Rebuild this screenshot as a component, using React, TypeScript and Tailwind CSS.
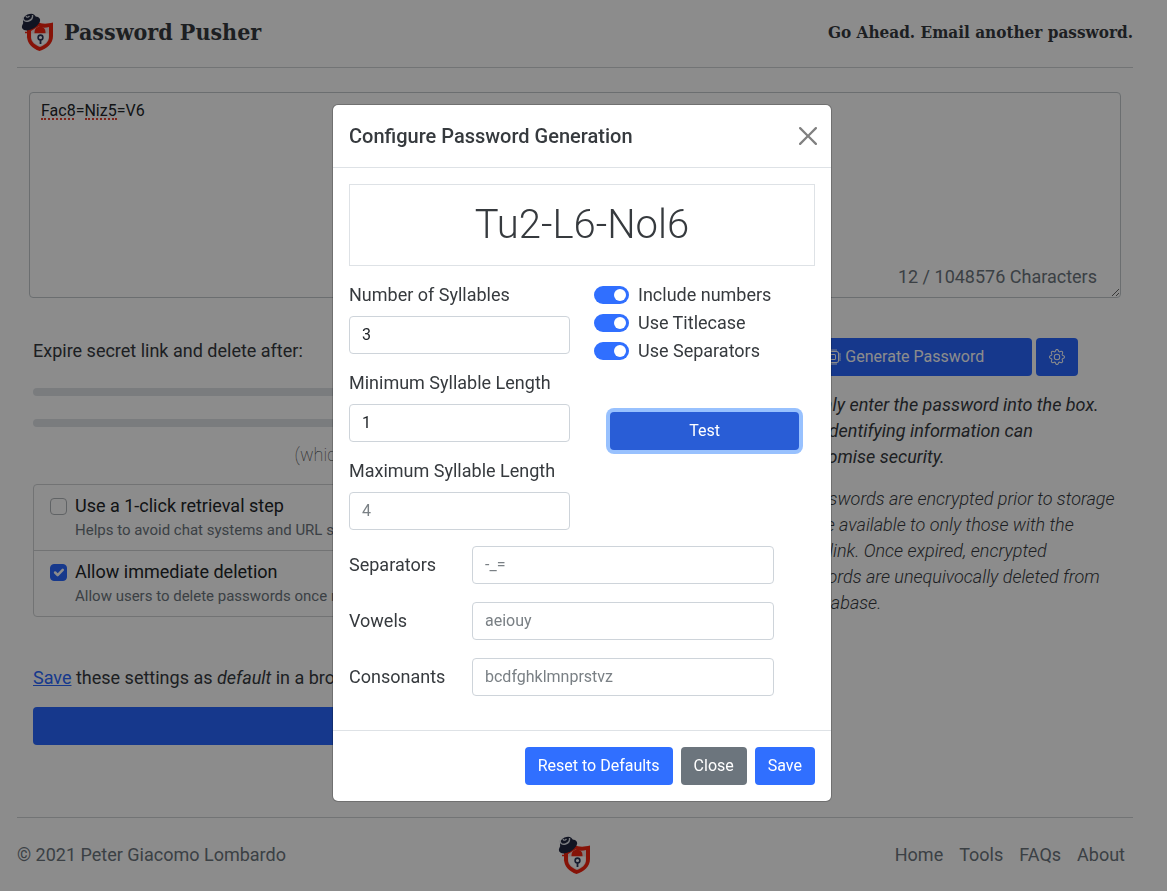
import { useState } from "react";
import { BsCpu, BsGear } from "react-icons/bs";

const Logo = () => {
    return (
        <svg className="w-9 h-10" viewBox="0 0 36 40" aria-hidden="true">
            <path d="M17 9.500c5 3 10 2.500 16 1V24c0 7.500-6 12.500-13.500 15C12 36.500 7 31 7 24v-6z" fill="#f5230f" />
            <path d="M18.500 14.500c3.500 1.500 7 1.500 10.500.5V25c0 5-4 8-9 10-5-2-9-5-9-10v-6z" fill="#f2dede" />
            <path d="M14.500 21.500v-1.500a5.500 5.500 0 0 1 11 0v1.500z" fill="#f5230f" />
            <path d="M11.500 21.500h17v4c-.6 4.500-4.500 7-8.500 8.500-4-1.500-7.900-4-8.500-8.500z" fill="#fff" />
            <circle cx="20.500" cy="25.500" r="2.400" fill="#fff" stroke="#2c3356" strokeWidth="1.600" />
            <path d="M20.500 28v4" stroke="#2c3356" strokeWidth="1.800" />
            <ellipse cx="11" cy="11.500" rx="10" ry="5.500" transform="rotate(-30 11 11.500)" fill="#20263f" />
            <path d="M3.500 12C2 8 4 4 7.500 2.500S15 1 16 6c-2 4-8 7-12.500 6z" fill="#20263f" />
            <path d="M3 5.500c0 3 2.500 4.500 5.500 3.500s4.500-3 4-6" fill="none" stroke="#dfe2ea" strokeWidth="1.400" />
            <path d="M6 4c.5 1.500 2 1.800 3.500 0" fill="none" stroke="#dfe2ea" strokeWidth="1.200" />
            <path d="M5 20.500h4l-1.500 5" fill="none" stroke="#f5230f" strokeWidth="1.500" />
        </svg>
    );
};

const Header = () => {
    return (
        <header className="flex items-center justify-between h-[68px] pb-1 border-b border-[#cfd4d6] font-['Roboto_Slab','DejaVu_Serif_Condensed','DejaVu_Serif',serif] font-bold">
            <a href="#" className="flex items-center gap-2 pl-[3px] text-[23px]">
                <Logo />
                <h1>Password Pusher</h1>
            </a>
            <p className="text-[17px]">Go Ahead. Email another password.</p>
        </header>
    );
};

const options = [
    { id: "retrieval", title: "Use a 1-click retrieval step", help: "Helps to avoid chat systems and URL scanners from eating up views.", checked: false },
    { id: "deletion", title: "Allow immediate deletion", help: "Allow users to delete passwords once retrieved.", checked: true },
];

const PushForm = () => {
    return (
        <main className="px-3 pt-6">
            <div className="relative">
                <textarea
                    aria-label="Password"
                    spellCheck={false}
                    defaultValue="Fac8=Niz5=V6"
                    className="block w-full h-[206px] px-[11px] py-1.5 border border-[#c3c9cd] rounded text-base leading-6 text-[#212529] resize"
                />
                <div className="absolute left-3 top-6 flex gap-[11px]">
                    <span className="w-[33px] border-b-2 border-dotted border-[#e8432f]"></span>
                    <span className="w-8 h-1 border-b-2 border-dotted border-[#e8432f]"></span>
                </div>
                <p className="absolute right-6 bottom-2 text-[#6c757d]">12 / 1048576 Characters</p>
            </div>

            <div className="grid grid-cols-[65%_1fr] gap-x-10 px-1 pt-10">
                <section>
                    <p>Expire secret link and delete after:</p>
                    <input type="range" aria-label="Days" className="mt-6 block w-full h-2 appearance-none rounded-full bg-[#dee2e6]" />
                    <input type="range" aria-label="Views" className="mt-[23px] block w-full h-2 appearance-none rounded-full bg-[#dee2e6]" />
                    <p className="mt-[15px] text-center font-thin">(whichever comes first)</p>
                    <ul className="mt-4 border border-[#cfd2d4] rounded divide-y divide-[#cfd2d4]">
                        {options.map((option) => (
                            <li key={option.id} className="flex gap-2 px-4 pt-2 pb-[9px]">
                                <div className="grid w-[17px] h-[17px] mt-[5px] shrink-0">
                                    <input
                                        id={option.id}
                                        type="checkbox"
                                        defaultChecked={option.checked}
                                        className="peer col-start-1 row-start-1 w-[17px] h-[17px] appearance-none rounded border border-[#b0b4b8] checked:bg-[#2a69ff] checked:border-[#2a69ff]"
                                    />
                                    <svg viewBox="0 0 20 20" className="col-start-1 row-start-1 w-[17px] h-[17px] hidden peer-checked:block pointer-events-none" fill="none" stroke="white" strokeWidth="3" strokeLinecap="round" strokeLinejoin="round">
                                        <path d="M6 10l3 3 6-6" />
                                    </svg>
                                </div>
                                <div>
                                    <label htmlFor={option.id} className="block text-[#212529]">{option.title}</label>
                                    <p className="text-[15px] leading-[22px] text-[#6c757d]">{option.help}</p>
                                </div>
                            </li>
                        ))}
                    </ul>
                    <p className="mt-12"><a href="#" className="text-[#2a69ff] underline">Save</a> these settings as <em>default</em> in a browser cookie.</p>
                    <button className="mt-4 w-full h-[38px] rounded bg-[#2866ff] text-base text-white">Push It!</button>
                </section>

                <section>
                    <div className="flex gap-1 pr-[39px]">
                        <button className="flex-1 h-[38px] rounded bg-[#2866ff] text-base text-white flex items-center justify-center gap-1">
                            <BsCpu className="w-4 h-4" />Generate Password
                        </button>
                        <button aria-label="Configure" className="w-[42px] h-[38px] rounded bg-[#2866ff] text-white flex items-center justify-center">
                            <BsGear className="w-4 h-4" />
                        </button>
                    </div>
                    <div className="pt-4 italic whitespace-nowrap">
                        <p>Tip: Only enter the password into the box.<br />Other identifying information can<br />compromise security.</p>
                        <p className="mt-4 font-light">
                            All passwords are encrypted prior to storage<br />and are available to only those with the<br />secret link. Once expired, encrypted<br />passwords are unequivocally deleted from<br />the database.
                        </p>
                    </div>
                </section>
            </div>
        </main>
    );
};

const Footer = () => {
    return (
        <footer className="mt-[72px] grid grid-cols-3 items-center h-[74px] border-t border-[#cfd4d6] text-[#6c757d]">
            <p>© 2021 Peter Giacomo Lombardo</p>
            <div className="flex justify-center"><Logo /></div>
            <nav className="flex justify-end gap-4 pr-2">
                <a href="#">Home</a>
                <a href="#">Tools</a>
                <a href="#">FAQs</a>
                <a href="#">About</a>
            </nav>
        </footer>
    );
};

const inputClass = "h-[38px] px-3 pb-0.5 border border-[#ced4da] rounded bg-white text-base text-[#212529] placeholder:text-[#7a8085]";

const lengths = [
    { id: "syllables", label: "Number of Syllables", value: "3" },
    { id: "min", label: "Minimum Syllable Length", value: "1" },
    { id: "max", label: "Maximum Syllable Length", placeholder: "4" },
];

const charsets = [
    { id: "separators", label: "Separators", placeholder: "-_=" },
    { id: "vowels", label: "Vowels", placeholder: "aeiouy" },
    { id: "consonants", label: "Consonants", placeholder: "bcdfghklmnprstvz" },
];

const Switch = ({ id, label }: { id: string; label: string }) => {
    const [on, setOn] = useState(true);

    return (
        <div className="flex items-center gap-[9px] h-7 pb-0.5">
            <input
                id={id}
                type="checkbox"
                role="switch"
                checked={on}
                onChange={() => setOn(!on)}
                className="flex items-center w-[35px] h-[18px] px-[3px] appearance-none rounded-full bg-[#adb5bd] checked:bg-[#306fff] checked:justify-end before:block before:w-3 before:h-3 before:rounded-full before:bg-white"
            />
            <label htmlFor={id}>{label}</label>
        </div>
    );
};

const ConfigureModal = () => {
    return (
        <div className="fixed inset-0 z-10 flex items-start justify-center pt-[104px] pr-[3px] bg-black/45">
            <div role="dialog" aria-labelledby="modal-title" className="w-[500px] bg-white border border-black/20 bg-clip-padding rounded-md">
                <div className="flex items-center justify-between h-[63px] pl-4 pr-3.5 border-b border-[#dee2e6]">
                    <h2 id="modal-title" className="text-xl font-medium">Configure Password Generation</h2>
                    <button aria-label="Dismiss" className="text-[#808080]">
                        <svg viewBox="0 0 16 16" className="w-[18px] h-[18px]" fill="currentColor">
                            <path d="M.293.293a1 1 0 011.414 0L8 6.586 14.293.293a1 1 0 111.414 1.414L9.414 8l6.293 6.293a1 1 0 01-1.414 1.414L8 9.414l-6.293 6.293a1 1 0 01-1.414-1.414L6.586 8 .293 1.707a1 1 0 010-1.414z" />
                        </svg>
                    </button>
                </div>

                <div className="p-4">
                    <p className="flex items-center justify-center h-[82px] border border-[#dee2e6] text-[40px] font-light">Tu2-L6-Nol6</p>
                    <div className="grid grid-cols-2 gap-6 mt-4">
                        <div className="flex flex-col gap-4">
                            {lengths.map((field) => (
                                <div key={field.id} className="flex flex-col gap-2">
                                    <label htmlFor={field.id}>{field.label}</label>
                                    <input id={field.id} type="text" defaultValue={field.value} placeholder={field.placeholder} className={inputClass} />
                                </div>
                            ))}
                        </div>
                        <div>
                            <Switch id="numbers" label="Include numbers" />
                            <Switch id="titlecase" label="Use Titlecase" />
                            <Switch id="use-separators" label="Use Separators" />
                            <div className="px-4 mt-[46px]">
                                <button className="w-full h-[38px] rounded bg-[#295dd6] text-base text-white ring-4 ring-[#98c1fe]">Test</button>
                            </div>
                        </div>
                    </div>
                    <div className="flex flex-col gap-[18px] mt-4 mb-[18px]">
                        {charsets.map((field) => (
                            <div key={field.id} className="flex items-center">
                                <label htmlFor={field.id} className="w-[123px]">{field.label}</label>
                                <input id={field.id} type="text" placeholder={field.placeholder} className={inputClass + " w-[302px]"} />
                            </div>
                        ))}
                    </div>
                </div>

                <div className="flex justify-end gap-2 p-4 border-t border-[#dee2e6] text-base text-white">
                    <button className="h-[38px] px-[13px] rounded bg-[#306fff]">Reset to Defaults</button>
                    <button className="h-[38px] px-[13px] rounded bg-[#6c757d]">Close</button>
                    <button className="h-[38px] px-[13px] rounded bg-[#306fff]">Save</button>
                </div>
            </div>
        </div>
    );
};

const App = () => {
    return (
        <div className="bg-white font-[Roboto,sans-serif] text-[18px] leading-[26px] text-[#363a3e]">
            <div className="pl-[17px] pr-[34px]">
                <Header />
                <PushForm />
                <Footer />
            </div>
            <ConfigureModal />
        </div>
    );
};

export default App;
